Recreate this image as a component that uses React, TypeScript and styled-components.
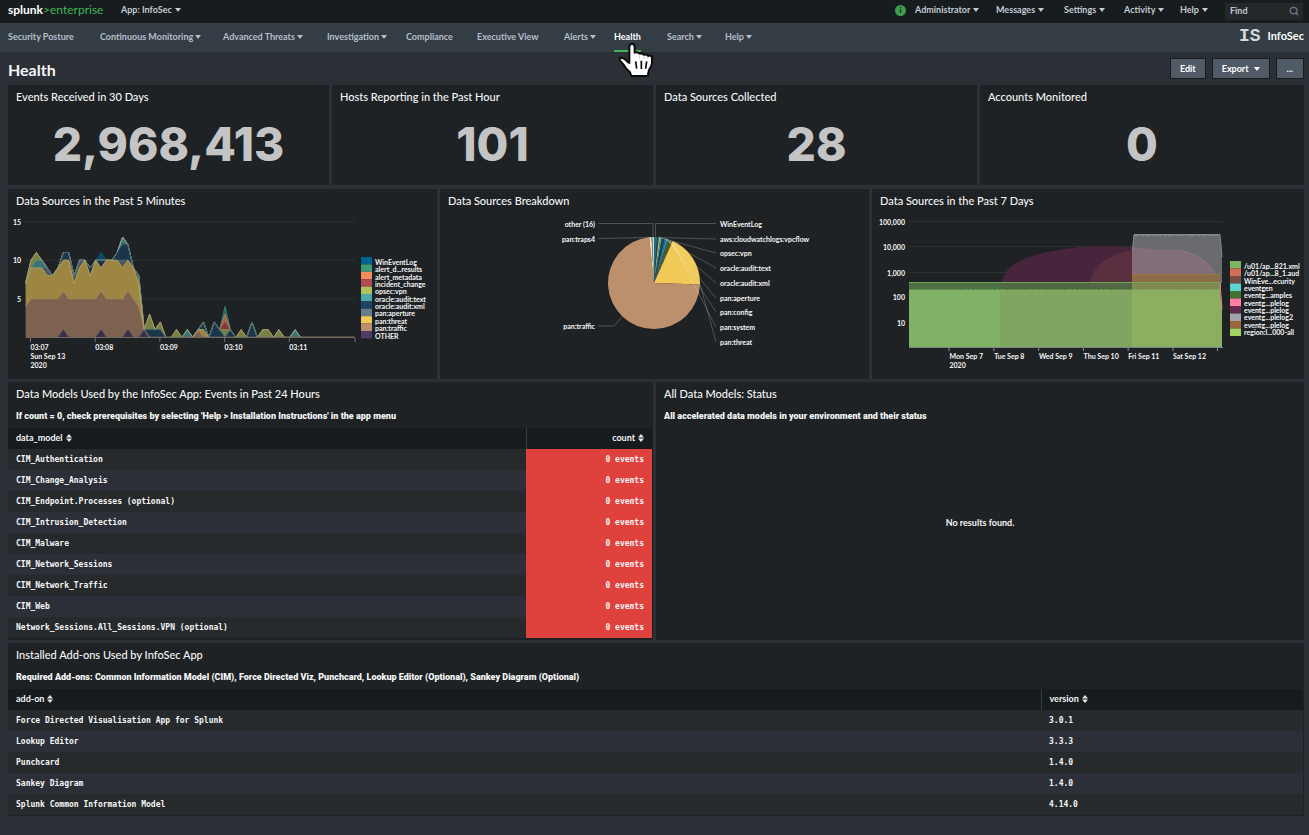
import React from "react";
import styled, { createGlobalStyle } from "styled-components";
import { Search } from "lucide-react";

const SANS = '"Lato", "Liberation Sans", sans-serif';
const MONO = '"DejaVu Sans Mono", "Liberation Mono", monospace';

const GlobalStyle = createGlobalStyle`
  * { box-sizing: border-box; }
  body {
    margin: 0;
    background: #2b2f36;
    color: #f5f6f7;
    font: 700 9px/12px ${SANS};
  }
  h1, h2, h3, p { margin: 0; }
  a { color: inherit; text-decoration: none; }
`;

const Page = styled.div`
  min-height: 100vh;
`;

const TopBar = styled.header`
  display: flex;
  align-items: center;
  height: 23px;
  padding: 0 6px 3px 8px;
  background: #171c1e;
  color: #c3cbd4;
`;

const Logo = styled.a`
  width: 113px;
  font-size: 12px;
  line-height: 16px;
  font-weight: 700;
  color: #ffffff;
`;

const LogoAccent = styled.span`
  font-weight: 400;
  color: #3fb658;
`;

const MenuButton = styled.button`
  display: flex;
  align-items: center;
  gap: 3px;
  padding: 0;
  border: 0;
  background: none;
  color: inherit;
  font: inherit;
  white-space: nowrap;
`;

const Caret = styled.span`
  display: inline-block;
  border: 3px solid transparent;
  border-top: 4px solid currentColor;
  border-bottom: 0;
`;

const UserMenus = styled.div`
  display: grid;
  grid-template-columns: 20px 81px 68px 60px 56px 45px;
  align-items: center;
  margin-left: auto;
`;

const InfoDot = styled.span`
  width: 11px;
  height: 11px;
  border-radius: 50%;
  background: #3f9a4b;
  color: #171c1e;
  font-size: 8px;
  line-height: 11px;
  text-align: center;
`;

const FindBox = styled.label`
  display: flex;
  align-items: center;
  width: 78px;
  height: 17px;
  margin-top: 3px;
  padding: 0 4px 1px 5px;
  background: #24282b;
  color: #6b7a8c;
`;

const FindInput = styled.input`
  flex: 1;
  min-width: 0;
  padding: 0;
  border: 0;
  outline: 0;
  background: none;
  color: #c3cbd4;
  font: inherit;
  &::placeholder { color: #c3cbd4; opacity: 1; }
`;

const NavBar = styled.nav`
  display: flex;
  align-items: center;
  height: 29px;
  padding: 0 5px 0 8px;
  background: #343c44;
  color: #b4bfcb;
`;

const NavLinks = styled.div`
  display: grid;
  grid-template-columns: 92px 123px 104px 79px 71px 87px 50px 53px 58px 40px;
  height: 29px;
`;

const NavLink = styled.a<{ $active?: boolean }>`
  position: relative;
  display: flex;
  align-items: center;
  justify-self: start;
  gap: 2px;
  white-space: nowrap;
  color: ${(p) => (p.$active ? "#ffffff" : "inherit")};
  border-bottom: 2px solid ${(p) => (p.$active ? "#45b457" : "transparent")};
`;

const HandPointer = styled.svg`
  position: absolute;
  left: 3px;
  top: 18px;
  width: 38px;
  height: 38px;
  z-index: 2;
`;

const AppBrand = styled.a`
  display: flex;
  align-items: center;
  gap: 7px;
  margin-left: auto;
  padding-bottom: 3px;
  color: #ffffff;
  font-size: 11px;
`;

const AppMark = styled.span`
  font: 700 18px/20px "Liberation Mono", monospace;
  color: #d5d8da;
`;

const TitleBar = styled.div`
  display: flex;
  align-items: center;
  justify-content: space-between;
  height: 33px;
  padding: 0 5px 0 8px;
`;

const PageTitle = styled.h1`
  font-size: 16px;
  line-height: 20px;
  padding-top: 2px;
`;

const Actions = styled.div`
  display: flex;
  gap: 6px;
`;

const ActionButton = styled.button`
  display: flex;
  align-items: center;
  gap: 5px;
  height: 21px;
  padding: 0 9px;
  border: 1px solid #171c1e;
  background: #515b66;
  color: #ffffff;
  font: inherit;
  &:last-child { padding: 0 10px; }
`;

const Dashboard = styled.main`
  padding: 0 5px 16px 8px;
`;

const Row = styled.div<{ $columns: number }>`
  display: grid;
  grid-template-columns: repeat(${(p) => p.$columns}, minmax(0, 1fr));
  margin-bottom: 3px;
  &:first-child { margin-bottom: 4px; }
`;

const Panel = styled.section<{ $height: number }>`
  display: flex;
  flex-direction: column;
  min-height: ${(p) => p.$height}px;
  background: #1e2224;
  border-right: 3px solid #2b2f36;
  &:last-child { border-right: 0; }
`;

const PanelTitle = styled.h2`
  padding: 5px 8px 6px;
  font-size: 11px;
  line-height: 14px;
  font-weight: 500;
`;

const PanelNote = styled.p`
  padding: 3px 8px 6px;
  font-family: Roboto, ${SANS};
  font-weight: 900;
`;

const BigNumber = styled.div`
  flex: 1;
  padding-top: 4px;
  font: 800 46px/60px Inter, ${SANS};
  text-align: center;
  color: #c4c4c4;
`;

const Chart = styled.svg`
  display: block;
  width: 100%;
  height: 164px;
  font: 700 7px ${SANS};
  fill: #f5f6f7;
`;

const EmptyState = styled.p`
  display: flex;
  flex: 1;
  align-items: center;
  justify-content: center;
  padding-bottom: 22px;
`;

const TableWrap = styled.div`
  padding-right: 1px;
`;

const DataTable = styled.table`
  width: 100%;
  border-collapse: collapse;
  table-layout: fixed;
`;

const HeadCell = styled.th<{ $width?: number; $right?: boolean }>`
  width: ${(p) => (p.$width ? `${p.$width}px` : "auto")};
  height: 21px;
  padding: 0 8px 1px;
  background: #161b1d;
  text-align: ${(p) => (p.$right ? "right" : "left")};
  & + & { border-left: 1px solid #343c44; }
`;

const BodyRow = styled.tr`
  background: #272a2c;
  &:nth-child(even) { background: #2c2f37; }
`;

const Cell = styled.td<{ $alert?: boolean }>`
  height: 21px;
  padding: 0 8px;
  font: 700 8px/12px ${MONO};
  text-align: ${(p) => (p.$alert ? "right" : "left")};
  background: ${(p) => (p.$alert ? "#df413d" : "transparent")};
`;

const SortIcon = styled.svg`
  width: 6px;
  height: 8px;
  margin-left: 3px;
  vertical-align: -1px;
  fill: #e4e7ea;
`;

const Sort = () => (
  <SortIcon viewBox="0 0 6 8" aria-hidden="true">
    <path d="M3 0 6 3.4H0ZM3 8 0 4.6h6Z" />
  </SortIcon>
);

/* ---------- Data sources, past 5 minutes ---------- */

type Series = { name: string; color: string; values: Record<number, number> };

const STEPS = 62;

// Listed from the bottom of the stack to the top.
const recent: Series[] = [
  { name: "OTHER", color: "#4f3b68", values: { 7: 1, 14: 1, 19: 1, 22: 1 } },
  {
    name: "pan:traffic",
    color: "#bd906d",
    values: {
      0: 4, 1: 5, 2: 5, 3: 5, 4: 5, 5: 5, 6: 5, 7: 5, 8: 5, 9: 5, 10: 5, 11: 5, 12: 5,
      13: 5, 14: 5, 15: 5, 16: 5, 17: 5, 18: 5, 19: 5, 20: 5, 21: 4, 32: 1,
    },
  },
  {
    name: "pan:threat",
    color: "#f1c957",
    values: {
      0: 3, 1: 4, 2: 4, 3: 4, 4: 3, 5: 3, 6: 4, 7: 4, 8: 5, 9: 2, 10: 4, 11: 5, 12: 3,
      13: 5, 14: 3, 15: 5, 16: 5, 17: 5, 18: 4, 19: 4, 20: 4, 21: 3, 33: 1,
    },
  },
  { name: "pan:aperture", color: "#647e8c", values: { 4: 1, 9: 1, 10: 1, 18: 1, 21: 1 } },
  {
    name: "oracle:audit:xml",
    color: "#1c4265",
    values: {
      7: 1, 8: 1, 12: 1, 14: 1, 17: 1, 18: 2, 19: 2, 23: 1, 24: 1, 25: 1, 33: 1, 35: 2,
      36: 1, 38: 1, 42: 2,
    },
  },
  { name: "oracle:audit:text", color: "#4fa9ab", values: { 2: 1, 3: 1, 18: 1, 30: 1, 50: 1 } },
  {
    name: "opsec:vpn",
    color: "#b1c15c",
    values: { 1: 1, 2: 1, 23: 2, 25: 1, 28: 1, 37: 1, 40: 1, 44: 1, 45: 1, 47: 1 },
  },
  { name: "incident_change", color: "#af4d51", values: { 37: 1 } },
  { name: "alert_metadata", color: "#f28d5b", values: { 37: 1 } },
  { name: "alert_d...results", color: "#3b9a78", values: { 37: 1 } },
  { name: "WinEventLog", color: "#006391", values: { 14: 1 } },
];

const stepX = (i: number) => 25.6 + i * 5.39;
const countY = (v: number) => 337.4 - v * 7.72;

function RecentChart() {
  const base = new Array(STEPS).fill(0);
  const layers = recent.map((s) => {
    const low = [...base];
    for (let i = 0; i < STEPS; i++) base[i] += s.values[i] || 0;
    const top = base.map((v, i) => `${stepX(i)},${countY(v)}`);
    const bottom = low.map((v, i) => `${stepX(i)},${countY(v)}`);
    return { ...s, top: top.join(" "), area: [...top, ...bottom.reverse()].join(" ") };
  });
  return (
    <Chart viewBox="8 214 429 164" role="img" aria-label="Events per data source over 5 minutes">
      {[15, 10, 5].map((v) => (
        <g key={v}>
          <path d={`M26 ${countY(v)}H355`} stroke="#2d3133" />
          <text x="21" y={countY(v) + 3} textAnchor="end">{v}</text>
        </g>
      ))}
      {layers.map((l) => (
        <polygon key={l.name} points={l.area} fill={l.color} fillOpacity="0.6" />
      ))}
      {[...layers].reverse().map((l) => (
        <polyline key={l.name} points={l.top} fill="none" stroke={l.color} strokeOpacity="0.6" />
      ))}
      <path d="M26 337.5H355" stroke="#74695f" />
      {["03:07", "03:08", "03:09", "03:10", "03:11"].map((t, i) => (
        <g key={t}>
          <path d={`M${30.5 + i * 64.7} 338v4`} stroke="#6c7175" />
          <text x={30.5 + i * 64.7} y="350">{t}</text>
        </g>
      ))}
      <path d="M355 338v4" stroke="#6c7175" />
      <text x="30.5" y="359">Sun Sep 13</text>
      <text x="30.5" y="368">2020</text>
      {[...recent].reverse().map((s, i) => (
        <g key={s.name}>
          <rect x="361" y={257 + i * 7.4} width="11" height="7.4" fill={s.color} />
          <text x="375" y={265 + i * 7.35}>{s.name}</text>
        </g>
      ))}
    </Chart>
  );
}

/* ---------- Breakdown pie ---------- */

const slices: [number, number, string][] = [
  [0, 4, "#1a6b94"],
  [4, 6, "#2b4a58"],
  [6, 8, "#b1c15c"],
  [8, 10, "#4fa9ab"],
  [10, 14, "#1c4265"],
  [14, 15, "#647e8c"],
  [15, 18, "#1590ad"],
  [18, 24, "#4c5a30"],
  [24, 92, "#f1c957"],
  [92, 354, "#bd906d"],
  [354, 357, "#f0e3ae"],
  [357, 358, "#8c7a56"],
  [358, 360, "#d9dcc4"],
];

const rim = (deg: number) => {
  const a = (deg * Math.PI) / 180;
  return `${654 + 46 * Math.sin(a)} ${283 - 46 * Math.cos(a)}`;
};

const rightLabels: [string, number, string][] = [
  ["WinEventLog", 227, "M655.5 237V223.5H716"],
  ["aws:cloudwatchlogs:vpcflow", 242, "M658 237.5 716 239"],
  ["opsec:vpn", 256, "M661 238 716 253"],
  ["oracle:audit:text", 271, "M664 239 716 268"],
  ["oracle:audit:xml", 286, "M666 239.5 716 283"],
  ["pan:aperture", 301, "M668 240 716 298"],
  ["pan:config", 315, "M670 241 716 312"],
  ["pan:system", 330, "M672 242 716 327"],
  ["pan:threat", 345, "M700 284 716 342"],
];

function BreakdownChart() {
  return (
    <Chart viewBox="440 214 429 164" role="img" aria-label="Share of events per data source">
      {slices.map(([from, to, color]) => (
        <path
          key={from}
          d={`M654 283 L${rim(from)} A46 46 0 ${to - from > 180 ? 1 : 0} 1 ${rim(to)}Z`}
          fill={color}
        />
      ))}
      <g fill="none" stroke="#ffffff" strokeOpacity="0.22">
        {rightLabels.map(([name, , d]) => <path key={name} d={d} />)}
        <path d="M653 237V223.5H598M650 237.500 598 238.500M622 317l-8 9h-16" />
      </g>
      {rightLabels.map(([name, y]) => <text key={name} x="720" y={y}>{name}</text>)}
      <g textAnchor="end">
        <text x="595" y="227">other (16)</text>
        <text x="595" y="242">pan:traps4</text>
        <text x="595" y="329">pan:traffic</text>
      </g>
    </Chart>
  );
}

/* ---------- Data sources, past 7 days ---------- */

const weekLegend: [string, string][] = [
  ["/u01/ap...821.xml", "#7db561"],
  ["/u01/ap...8_1.aud", "#d0705a"],
  ["WinEve...ecurity", "#774c42"],
  ["eventgen", "#5fd2d4"],
  ["eventg...amples", "#41752f"],
  ["eventg...plelog", "#ff7fa3"],
  ["eventg...plelog", "#64274f"],
  ["eventg...plelog2", "#a1a4a8"],
  ["eventg...plelog", "#99683a"],
  ["region:l...000-all", "#a0d362"],
];

const scale: [string, number][] = [
  ["100,000", 221.5],
  ["10,000", 246.5],
  ["1,000", 272.5],
  ["100", 296.5],
  ["10", 322.5],
];

const days = ["Mon Sep 7", "Tue Sep 8", "Wed Sep 9", "Thu Sep 10", "Fri Sep 11", "Sat Sep 12"];

function WeekChart() {
  return (
    <Chart viewBox="872 214 432 164" role="img" aria-label="Events per data source over 7 days">
      {scale.map(([label, y]) => (
        <g key={label}>
          <path d={`M909 ${y}H1223`} stroke="#2d3133" />
          <text x="905" y={y + 3} textAnchor="end">{label}</text>
        </g>
      ))}
      <path d="M1001 283C1007 264 1019 261 1032 256C1052 250 1066 249 1082 246.500H1132V283Z" fill="#47253c" />
      <path d="M1089 283C1094 264 1110 254 1132 250V283Z" fill="#5a3040" />
      <path d="M1132 283V250L1134 234.500H1220L1222 257V283Z" fill="#6a6b6e" />
      <path d="M1132 283V247C1150 249 1160 250 1177 250C1196 252 1214 264 1218 283Z" fill="#836f7c" />
      <path d="M1177 250C1196 252 1214 264 1218 283" fill="none" stroke="#8a7b74" />
      <path d="M1132.500 250L1134 234.500H1220L1222 257" fill="none" stroke="#85888b" />
      <path d="M1135 235.500H1219" stroke="#85888b" strokeDasharray="5 2 3 1" />
      <path d="M1132 283V274.500H1220V283Z" fill="#8d6c48" />
      <path d="M1132 274.500H1220" stroke="#9b7448" />
      <path d="M909 282.500H1001V291H909Z" fill="#4f7046" />
      <path d="M1000 282.500H1132V291H1000Z" fill="#526744" />
      <path d="M1132 282.500H1221V291H1132Z" fill="#7f8b52" />
      <path d="M909 290H1000V347H909Z" fill="#7fb264" />
      <path d="M1000 290H1132V347H1000Z" fill="#7fa661" />
      <path d="M1132 290H1220L1222 309V347H1132Z" fill="#8cae61" />
      <path d="M1220 283L1222 309" stroke="#d98a80" />
      <path d="M909 282.500H1220" stroke="#70a555" />
      <path d="M909 290H1220" stroke="#82b45f" strokeDasharray="7 1 4 1" />
      <path d="M909 293.500H1132" stroke="#8fae63" strokeOpacity="0.6" strokeDasharray="2 2 3 1" />
      <path d="M909 347.500H1223" stroke="#7b8480" />
      {days.map((d, i) => (
        <g key={d}>
          <path d={`M${949 + i * 44.8} 348v3`} stroke="#8c9195" />
          <text x={949.5 + i * 44.7} y="359">{d}</text>
        </g>
      ))}
      <path d="M1217.500 348v3" stroke="#8c9195" />
      <text x="949.5" y="368">2020</text>
      {weekLegend.map(([name, color], i) => (
        <g key={i}>
          <rect x="1230" y={261 + i * 7.5} width="11" height="7.5" fill={color} />
          <text x="1244" y={269 + i * 7.35}>{name}</text>
        </g>
      ))}
    </Chart>
  );
}

/* ---------- Page data ---------- */

const navItems: [string, boolean][] = [
  ["Security Posture", false],
  ["Continuous Monitoring", true],
  ["Advanced Threats", true],
  ["Investigation", true],
  ["Compliance", false],
  ["Executive View", false],
  ["Alerts", true],
  ["Health", false],
  ["Search", true],
  ["Help", true],
];

const stats: [string, string][] = [
  ["Events Received in 30 Days", "2,968,413"],
  ["Hosts Reporting in the Past Hour", "101"],
  ["Data Sources Collected", "28"],
  ["Accounts Monitored", "0"],
];

const models = [
  "CIM_Authentication",
  "CIM_Change_Analysis",
  "CIM_Endpoint.Processes (optional)",
  "CIM_Intrusion_Detection",
  "CIM_Malware",
  "CIM_Network_Sessions",
  "CIM_Network_Traffic",
  "CIM_Web",
  "Network_Sessions.All_Sessions.VPN (optional)",
];

const addons: [string, string][] = [
  ["Force Directed Visualisation App for Splunk", "3.0.1"],
  ["Lookup Editor", "3.3.3"],
  ["Punchcard", "1.4.0"],
  ["Sankey Diagram", "1.4.0"],
  ["Splunk Common Information Model", "4.14.0"],
];

const Hand = () => (
  <HandPointer viewBox="560 122 114 114" aria-hidden="true">
    <path
      d="M597 141Q597 130 605 130Q613 130 613 141V157Q621 153 627 160Q636 157 641 164Q648 160 653 167Q664 163 665 173V188Q664 197 656 209L652 227H603L599 216Q587 206 580 193L569 181Q565 172 575 172Q584 174 591 184L597 188Z"
      fill="#ffffff"
      stroke="#0b0b0b"
      strokeWidth="6"
      strokeLinejoin="round"
    />
    <path d="M616 183 619 205M633 181V206M649 183 646 205" fill="none" stroke="#0b0b0b" strokeWidth="5" />
    <path d="M627 162V176M641 166V176M653 169V176" fill="none" stroke="#b9b9b9" strokeWidth="2" />
  </HandPointer>
);

export default function App() {
  return (
    <Page>
      <GlobalStyle />
      <TopBar>
        <Logo href="#">
          splunk<LogoAccent>&gt;enterprise</LogoAccent>
        </Logo>
        <MenuButton>App: InfoSec <Caret /></MenuButton>
        <UserMenus>
          <InfoDot>i</InfoDot>
          {["Administrator", "Messages", "Settings", "Activity", "Help"].map((m) => (
            <MenuButton key={m}>{m} <Caret /></MenuButton>
          ))}
        </UserMenus>
        <FindBox>
          <FindInput placeholder="Find" aria-label="Find" />
          <Search size={10} strokeWidth={3} />
        </FindBox>
      </TopBar>
      <NavBar>
        <NavLinks>
          {navItems.map(([name, menu]) => (
            <NavLink key={name} href="#" $active={name === "Health"}>
              {name}
              {menu && <Caret />}
              {name === "Health" && <Hand />}
            </NavLink>
          ))}
        </NavLinks>
        <AppBrand href="#">
          <AppMark>IS</AppMark>
          InfoSec
        </AppBrand>
      </NavBar>
      <TitleBar>
        <PageTitle>Health</PageTitle>
        <Actions>
          <ActionButton>Edit</ActionButton>
          <ActionButton>Export <Caret /></ActionButton>
          <ActionButton>...</ActionButton>
        </Actions>
      </TitleBar>
      <Dashboard>
        <Row $columns={4}>
          {stats.map(([title, value]) => (
            <Panel key={title} $height={100}>
              <PanelTitle>{title}</PanelTitle>
              <BigNumber>{value}</BigNumber>
            </Panel>
          ))}
        </Row>
        <Row $columns={3}>
          <Panel $height={190}>
            <PanelTitle>Data Sources in the Past 5 Minutes</PanelTitle>
            <RecentChart />
          </Panel>
          <Panel $height={190}>
            <PanelTitle>Data Sources Breakdown</PanelTitle>
            <BreakdownChart />
          </Panel>
          <Panel $height={190}>
            <PanelTitle>Data Sources in the Past 7 Days</PanelTitle>
            <WeekChart />
          </Panel>
        </Row>
        <Row $columns={2}>
          <Panel $height={258}>
            <PanelTitle>Data Models Used by the InfoSec App: Events in Past 24 Hours</PanelTitle>
            <PanelNote>
              If count = 0, check prerequisites by selecting 'Help &gt; Installation Instructions' in the app menu
            </PanelNote>
            <TableWrap>
              <DataTable>
                <thead>
                  <tr>
                    <HeadCell>data_model<Sort /></HeadCell>
                    <HeadCell $width={126} $right>count<Sort /></HeadCell>
                  </tr>
                </thead>
                <tbody>
                  {models.map((m) => (
                    <BodyRow key={m}>
                      <Cell>{m}</Cell>
                      <Cell $alert>0 events</Cell>
                    </BodyRow>
                  ))}
                </tbody>
              </DataTable>
            </TableWrap>
          </Panel>
          <Panel $height={258}>
            <PanelTitle>All Data Models: Status</PanelTitle>
            <PanelNote>All accelerated data models in your environment and their status</PanelNote>
            <EmptyState>No results found.</EmptyState>
          </Panel>
        </Row>
        <Row $columns={1}>
          <Panel $height={173}>
            <PanelTitle>Installed Add-ons Used by InfoSec App</PanelTitle>
            <PanelNote>
              Required Add-ons: Common Information Model (CIM), Force Directed Viz, Punchcard, Lookup Editor
              (Optional), Sankey Diagram (Optional)
            </PanelNote>
            <TableWrap>
              <DataTable>
                <thead>
                  <tr>
                    <HeadCell>add-on<Sort /></HeadCell>
                    <HeadCell $width={262}>version<Sort /></HeadCell>
                  </tr>
                </thead>
                <tbody>
                  {addons.map(([name, version]) => (
                    <BodyRow key={name}>
                      <Cell>{name}</Cell>
                      <Cell>{version}</Cell>
                    </BodyRow>
                  ))}
                </tbody>
              </DataTable>
            </TableWrap>
          </Panel>
        </Row>
      </Dashboard>
    </Page>
  );
}
